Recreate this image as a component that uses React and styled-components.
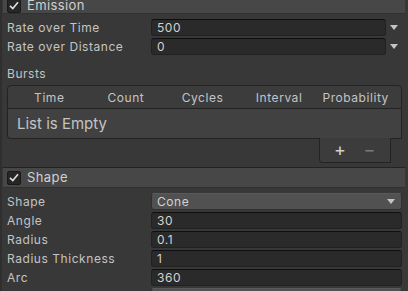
import React from 'react';
import styled, { createGlobalStyle } from 'styled-components';

const GlobalStyle = createGlobalStyle`
  html, body {
    margin: 0;
    padding: 0;
    background: #383838;
  }
  * { box-sizing: border-box; }
`;

const Panel = styled.div`
  width: 408px;
  height: 291px;
  overflow: hidden;
  background: #383838;
  border-left: 2px solid #2f2f2f;
  font-family: Inter, "Noto Sans", sans-serif;
  color: #c4c4c4;
  font-size: 12px;
  letter-spacing: 0.55px;
`;

const Header = styled.div`
  display: flex;
  align-items: center;
  gap: 6px;
  height: ${props => props.height || 20}px;
  margin: ${props => props.top || 0}px 3px 0 1px;
  padding-left: 4px;
  background: #474747;
  border-top: 1px solid #232323;
  border-bottom: 1px solid #303030;
  font-size: 13px;
  line-height: 13px;
  color: #d0d0d0;
  letter-spacing: 0.4px;
`;

const Check = styled.span`
  display: flex;
  align-items: center;
  justify-content: center;
  width: 14px;
  height: 14px;
  background: #262626;
  border: 1px solid #1a1a1a;
  border-radius: 2px;
`;

const Body = styled.div`
  display: flex;
  flex-direction: column;
  padding-top: ${props => props.top || 0}px;
  padding-left: 3px;
  padding-right: 6px;
`;

const Row = styled.div`
  display: grid;
  grid-template-columns: 146px 1fr ${props => (props.menu ? '16px' : '')};
  align-items: center;
  height: 19px;
`;

const Label = styled.span`
  padding-left: ${props => (props.indent ? 17 : 2)}px;
  white-space: nowrap;
`;

const Field = styled.div`
  display: flex;
  align-items: center;
  justify-content: space-between;
  height: 17px;
  padding: 0 6px 0 5px;
  background: ${props => (props.select ? '#515151' : '#2a2a2a')};
  border: 1px solid ${props => (props.select ? '#303030' : '#212121')};
  border-top-color: ${props => (props.select ? '#5a5a5a' : '#0f0f0f')};
  border-radius: 3px;
  color: #d2d2d2;
`;

const Arrow = styled.span`
  justify-self: center;
  width: 0;
  height: 0;
  border-left: 4px solid transparent;
  border-right: 4px solid transparent;
  border-top: 5px solid #c4c4c4;
`;

const SubTitle = styled.div`
  display: flex;
  align-items: center;
  height: 23px;
  margin-top: 6px;
  padding-left: 2px;
`;

const Table = styled.div`
  display: flex;
  flex-direction: column;
  margin-left: 2px;
`;

const TableHead = styled.div`
  display: grid;
  grid-template-columns: repeat(5, 1fr);
  align-items: center;
  height: 24px;
  padding: 0 7px 0 3px;
  background: #3c3c3c;
  border: 1px solid #232323;
  border-radius: 4px 4px 0 0;
  text-align: center;
`;

const TableBody = styled.div`
  display: flex;
  align-items: center;
  height: 30px;
  padding-left: 9px;
  background: #414141;
  border: 1px solid #232323;
  border-top: none;
  border-radius: 0 0 0 4px;
  font-size: 15px;
  letter-spacing: 0;
  color: #c4c4c4;
`;

const Footer = styled.div`
  display: flex;
  align-self: flex-end;
  align-items: center;
  gap: 17px;
  width: 72px;
  height: 25px;
  margin-right: 11px;
  margin-top: -1px;
  padding-left: 14px;
  background: #3c3c3c;
  border: 1px solid #232323;
  border-top: none;
  border-radius: 0 0 0 4px;
`;

const FooterButton = styled.span`
  font-size: 18px;
  line-height: 1;
  color: ${props => (props.dim ? '#7a7a7a' : '#d0d0d0')};
`;

function CheckMark() {
  return (
    <svg width="10" height="9" viewBox="0 0 10 9">
      <path d="M1 4.8 L3.8 7.5 L9 1.2" fill="none" stroke="#e0e0e0" strokeWidth="1.6" />
    </svg>
  );
}

export default function App() {
  return (
    <>
      <GlobalStyle />
      <Panel>
        <Header top={-3} height={17}>
          <Check><CheckMark /></Check>
          Emission
        </Header>
        <Body top={4}>
          <Row menu>
            <Label>Rate over Time</Label>
            <Field>500</Field>
            <Arrow />
          </Row>
          <Row menu>
            <Label>Rate over Distance</Label>
            <Field>0</Field>
            <Arrow />
          </Row>
          <SubTitle>Bursts</SubTitle>
          <Table>
            <TableHead>
              <span>Time</span>
              <span>Count</span>
              <span>Cycles</span>
              <span>Interval</span>
              <span>Probability</span>
            </TableHead>
            <TableBody>List is Empty</TableBody>
            <Footer>
              <FooterButton>+</FooterButton>
              <FooterButton dim>−</FooterButton>
            </Footer>
          </Table>
        </Body>
        <Header top={4} height={21}>
          <Check><CheckMark /></Check>
          Shape
        </Header>
        <Body top={4}>
          <Row>
            <Label>Shape</Label>
            <Field select>
              Cone
              <Arrow />
            </Field>
          </Row>
          <Row>
            <Label>Angle</Label>
            <Field>30</Field>
          </Row>
          <Row>
            <Label>Radius</Label>
            <Field>0.1</Field>
          </Row>
          <Row>
            <Label>Radius Thickness</Label>
            <Field>1</Field>
          </Row>
          <Row>
            <Label>Arc</Label>
            <Field>360</Field>
          </Row>
          <Row>
            <Label indent>Mode</Label>
            <Field select>
              Random
              <Arrow />
            </Field>
          </Row>
        </Body>
      </Panel>
    </>
  );
}
